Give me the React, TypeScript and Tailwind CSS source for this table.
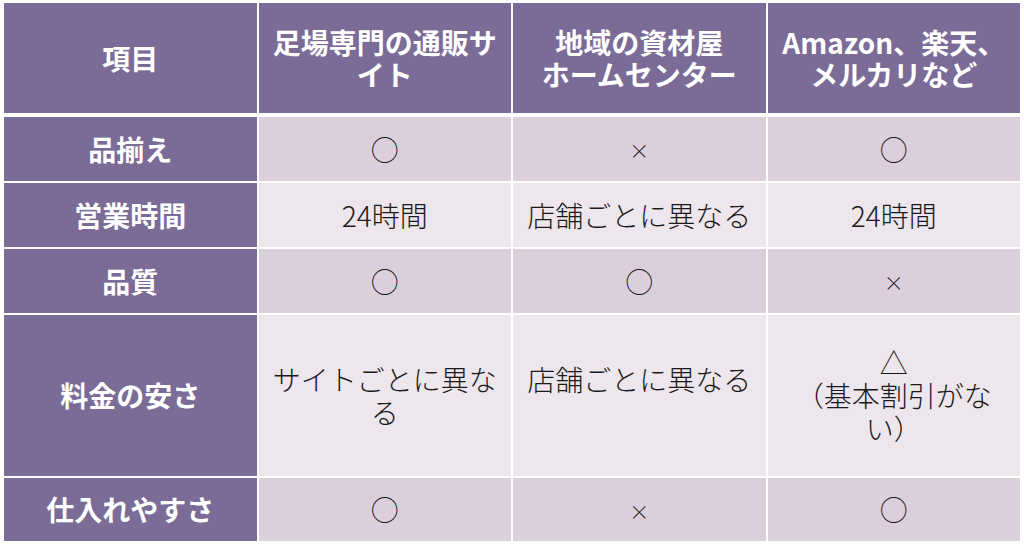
import React from "react";

type Row = { label: string; cells: React.ReactNode[]; h: string; tone: "dark" | "light" };

const X = <span className="text-[20px]">×</span>;

const rows: Row[] = [
  { label: "品揃え", cells: ["○", X, "○"], h: "h-[64px]", tone: "dark" },
  { label: "営業時間", cells: ["24時間", "店舗ごとに異なる", "24時間"], h: "h-[64px]", tone: "light" },
  { label: "品質", cells: ["○", "○", X], h: "h-[64px]", tone: "dark" },
  {
    label: "料金の安さ",
    cells: [
      "サイトごとに異なる",
      <>
        店舗ごとに異なる
        <br />
        &nbsp;
      </>,
      <>
        △
        <br />
        （基本割引がない）
      </>,
    ],
    h: "h-[161px]",
    tone: "light",
  },
  { label: "仕入れやすさ", cells: ["○", X, "○"], h: "h-[63px]", tone: "dark" },
];

const headers: React.ReactNode[] = [
  "項目",
  "足場専門の通販サイト",
  <>
    地域の資材屋
    <br />
    ホームセンター
  </>,
  <>
    Amazon、楽天、
    <br />
    メルカリなど
  </>,
];

export default function App() {
  return (
    <div
      className="w-[1024px] h-[545px] bg-white pt-[3px] px-[4px] overflow-hidden"
      style={{ fontFamily: '"Noto Sans CJK JP", "Noto Sans", sans-serif' }}
    >
      <div className="flex flex-col gap-[2px]">
        <div className="grid grid-cols-4 gap-[2px] h-[110px] mb-[2px]">
          {headers.map((h, i) => (
            <div
              key={i}
              className="bg-[#7b6b97] text-white font-bold text-[28px] leading-[32px] flex items-center justify-center text-center px-[12px]"
            >
              <div>{h}</div>
            </div>
          ))}
        </div>
        {rows.map((r) => (
          <div key={r.label} className={`grid grid-cols-4 gap-[2px] ${r.h}`}>
            <div className="bg-[#7b6b97] text-white font-bold text-[28px] leading-[33px] flex items-center justify-center">
              {r.label}
            </div>
            {r.cells.map((c, i) => (
              <div
                key={i}
                className={`${
                  r.tone === "dark" ? "bg-[#dccfdc]" : "bg-[#ede6ed]"
                } text-[#1a1a1a] font-light text-[28px] leading-[33px] flex items-center justify-center text-center px-[12px]`}
              >
                <div>{c}</div>
              </div>
            ))}
          </div>
        ))}
      </div>
    </div>
  );
}
